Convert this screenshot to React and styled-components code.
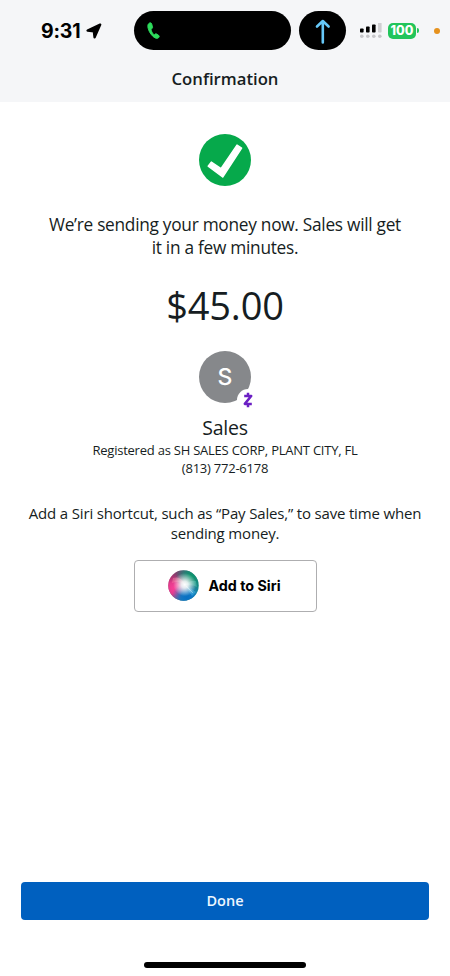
import React from 'react';
import styled, { createGlobalStyle, css } from 'styled-components';

const GlobalStyle = createGlobalStyle`
	* {
		box-sizing: border-box;
		margin: 0;
		padding: 0;
	}

	body {
		background: #fff;
		color: #161d22;
		font-family: 'Open Sans', 'Noto Sans', sans-serif;
	}

	svg {
		display: block;
		flex: none;
	}
`;

const Screen = styled.div`
	width: 450px;
	height: 976px;
	display: flex;
	flex-direction: column;
	overflow: hidden;
`;

const Header = styled.header`
	height: 102px;
	flex: none;
	background: #f5f6f8;
`;

const StatusBar = styled.div`
	height: 61px;
	padding-left: 41px;
	display: flex;
	align-items: center;
`;

const Time = styled.span`
	width: 45px;
	font: 700 19.5px/24px Inter, sans-serif;
	letter-spacing: -0.2px;
	color: #000;
	white-space: nowrap;
`;

const Island = styled.div`
	width: 157px;
	height: 39px;
	margin-left: 32px;
	padding-left: 13px;
	border-radius: 20px;
	background: #000;
	display: flex;
	align-items: center;
`;

const ArrowIsland = styled(Island)`
	width: 47px;
	margin-left: 8px;
	padding-left: 0;
	justify-content: center;
`;

const Signal = styled.svg`
	margin-left: 14px;
`;

const Battery = styled.div`
	width: 28px;
	height: 16px;
	margin-left: 6px;
	border-radius: 5px;
	background: #22c55b;
	color: #fff;
	font: 800 12.5px/16px Inter, sans-serif;
	text-align: center;
`;

const BatteryCap = styled.div`
	width: 2px;
	height: 5px;
	margin-left: 1px;
	border-radius: 0 2px 2px 0;
	background: #22c55b;
`;

const MicDot = styled.div`
	width: 6px;
	height: 6px;
	margin-left: 15px;
	border-radius: 50%;
	background: #e6921e;
`;

const Title = styled.h1`
	font-size: 16.7px;
	font-weight: 600;
	line-height: 36px;
	text-align: center;
`;

const Content = styled.main`
	flex: 1;
	padding-top: 32px;
	display: flex;
	flex-direction: column;
	align-items: center;
	text-align: center;
`;

const Text = styled.p`
	white-space: nowrap;

	${({ size, line, gap = 0, spacing = 0 }) => css`
		font-size: ${size}px;
		line-height: ${line}px;
		margin-top: ${gap}px;
		letter-spacing: ${spacing}px;
	`};
`;

const Avatar = styled.div`
	position: relative;
	width: 52px;
	height: 52px;
	margin-top: 22.5px;
	border-radius: 50%;
	background: #86888b;
	color: #fff;
	font: 500 23px/53px Inter, sans-serif;
`;

const Badge = styled.div`
	position: absolute;
	left: 38px;
	top: 38px;
	width: 22px;
	height: 22px;
	border-radius: 50%;
	background: #fff;
	display: flex;
	align-items: center;
	justify-content: center;
`;

const SiriButton = styled.button`
	width: 183px;
	height: 52px;
	margin-top: 16.5px;
	padding-left: 33px;
	border: 1px solid #aeaeb0;
	border-radius: 4px;
	background: #fff;
	color: #000;
	display: flex;
	align-items: center;
	gap: 10px;
	font: 700 14.3px/20px Inter, sans-serif;
	white-space: nowrap;
`;

const Footer = styled.footer`
	height: 94px;
	padding: 0 21px;
	display: flex;
	flex-direction: column;
	align-items: center;
`;

const DoneButton = styled.button`
	width: 100%;
	height: 38px;
	border: 0;
	border-radius: 4px;
	background: #0060bf;
	color: #edf7ff;
	font: 600 14.5px/38px 'Open Sans', sans-serif;
`;

const HomeIndicator = styled.div`
	width: 162px;
	height: 6px;
	margin-top: 42px;
	border-radius: 3px;
	background: #000;
`;

const LocationIcon = () => (
	<svg width="16" height="16" viewBox="0 0 16 16">
		<path
			d="M14.2 1.6 1.6 7.600l6.300.7.7 6z"
			fill="#000"
			stroke="#000"
			strokeWidth="2.4"
			strokeLinejoin="round"
		/>
	</svg>
);

const PhoneIcon = () => (
	<svg width="13" height="17" viewBox="0 0 13 17">
		<path
			d="M2.2 1.2C.8 2 .5 4 1.1 6.2c1 4.1 3.9 8.2 7.3 9.9 1.6.8 3 .2 3.7-1.1.3-.7.1-1.3-.5-1.7l-2-1.3c-.7-.4-1.3-.3-1.8.3-.5.5-.8.4-1.3 0C5.3 11 4.4 9.3 4.1 7.8c-.1-.6 0-.9.6-1.1.8-.3 1-.8.8-1.6L4.8 2.2C4.5.9 3.3.5 2.2 1.2z"
			fill="#2edb5c"
			stroke="#2edb5c"
			strokeWidth="0.9"
		/>
	</svg>
);

const UpArrowIcon = () => (
	<svg width="16" height="26" viewBox="0 0 16 26">
		<path
			d="M7.8 24.5V3M2 8.5l5.8-5.5 5.800 5.500"
			fill="none"
			stroke="#66c8f8"
			strokeWidth="2.6"
			strokeLinecap="round"
			strokeLinejoin="round"
		/>
	</svg>
);

const bars = [
	{ height: 4, color: '#000' },
	{ height: 6, color: '#000' },
	{ height: 8, color: '#000' },
	{ height: 10, color: '#cfcfd2' },
];

const SignalIcon = () => (
	<Signal width="22" height="16" viewBox="0 0 22 16">
		{bars.map(({ height, color }, i) => (
			<g key={i}>
				<rect x={i * 6} y={9.5 - height} width="3.6" height={height} rx="0.8" fill={color} />
				<circle cx={i * 6 + 1.8} cy="13.2" r="1.8" fill="#c6c6c9" />
			</g>
		))}
	</Signal>
);

const CheckIcon = () => (
	<svg width="52" height="52" viewBox="0 0 52 52">
		<circle cx="26" cy="26" r="26" fill="#06a94b" />
		<path
			d="M12.3 28.1 22 34.7 38 11.1 42.6 14.2 23.7 43 9.2 32.2z"
			fill="#fff"
			stroke="#fff"
			strokeWidth="1.5"
			strokeLinejoin="round"
		/>
	</svg>
);

const ZelleIcon = () => (
	<svg width="10" height="16" viewBox="0 0 10 16">
		<path
			d="M5 .7v3M5 12.3v3M1.2 4h7L1.8 11.9h7"
			fill="none"
			stroke="#6b1fc4"
			strokeWidth="2.5"
			strokeLinejoin="round"
		/>
	</svg>
);

const SiriIcon = () => (
	<svg width="31" height="31" viewBox="0 0 31 31">
		<defs>
			<linearGradient id="base" x1="0" y1="0.2" x2="1" y2="0.6">
				<stop offset="0" stopColor="#a02860" />
				<stop offset="0.45" stopColor="#4b6480" />
				<stop offset="1" stopColor="#16898e" />
			</linearGradient>
			<radialGradient id="pink" cx="0.18" cy="0.58" r="0.48">
				<stop offset="0" stopColor="#f83e98" />
				<stop offset="0.4" stopColor="#f03a90" stopOpacity="0.9" />
				<stop offset="1" stopColor="#e02c7c" stopOpacity="0" />
			</radialGradient>
			<radialGradient id="green" cx="0.75" cy="0.2" r="0.5">
				<stop offset="0" stopColor="#08966a" />
				<stop offset="1" stopColor="#08966a" stopOpacity="0" />
			</radialGradient>
			<radialGradient id="blue" cx="0.62" cy="0.9" r="0.5">
				<stop offset="0" stopColor="#0870c4" />
				<stop offset="0.4" stopColor="#0e78c8" stopOpacity="0.9" />
				<stop offset="1" stopColor="#1b85d0" stopOpacity="0" />
			</radialGradient>
			<radialGradient id="glow" cx="0.54" cy="0.47" r="0.38">
				<stop offset="0" stopColor="#fff" />
				<stop offset="0.3" stopColor="#fff" stopOpacity="0.85" />
				<stop offset="1" stopColor="#fff" stopOpacity="0" />
			</radialGradient>
		</defs>
		{['base', 'pink', 'green', 'blue'].map((id) => (
			<circle key={id} cx="15.5" cy="15.5" r="15.2" fill={`url(#${id})`} />
		))}
		<path d="M5 8c5-2 10 1 12 7-4-3-8-4-13-2z" fill="#fa91ac" opacity="0.4" />
		<path d="M17 15c3-3 7-5 11-4l1 6c-4-2-8-2-12-2z" fill="#72e2d3" opacity="0.3" />
		<path d="M17 15 28 22l-4 4z" fill="#57d2fa" opacity="0.35" />
		<circle cx="15.5" cy="15.5" r="15.2" fill="url(#glow)" />
		<path d="m18 16 7 7" stroke="#fff" strokeWidth="0.7" opacity="0.5" />
	</svg>
);

const App = () => (
	<>
		<GlobalStyle />
		<Screen>
			<Header>
				<StatusBar>
					<Time>9:31</Time>
					<LocationIcon />
					<Island>
						<PhoneIcon />
					</Island>
					<ArrowIsland>
						<UpArrowIcon />
					</ArrowIsland>
					<SignalIcon />
					<Battery>100</Battery>
					<BatteryCap />
					<MicDot />
				</StatusBar>
				<Title>Confirmation</Title>
			</Header>
			<Content>
				<CheckIcon />
				<Text size={17.3} line={23} gap={27} spacing={-0.28}>
					We’re sending your money now. Sales will get
					<br />
					it in a few minutes.
				</Text>
				<Text size={38} line={46} gap={23} spacing={-0.2}>
					$45.00
				</Text>
				<Avatar>
					S
					<Badge>
						<ZelleIcon />
					</Badge>
				</Avatar>
				<Text size={19.5} line={26} gap={12} spacing={-0.2}>
					Sales
				</Text>
				<Text size={13} line={18.5} spacing={-0.23}>
					Registered as SH SALES CORP, PLANT CITY, FL
					<br />
					(813) 772-6178
				</Text>
				<Text size={15} line={20} gap={25.5} spacing={-0.17}>
					Add a Siri shortcut, such as “Pay Sales,” to save time when
					<br />
					sending money.
				</Text>
				<SiriButton>
					<SiriIcon />
					Add to Siri
				</SiriButton>
			</Content>
			<Footer>
				<DoneButton>Done</DoneButton>
				<HomeIndicator />
			</Footer>
		</Screen>
	</>
);

export default App;
